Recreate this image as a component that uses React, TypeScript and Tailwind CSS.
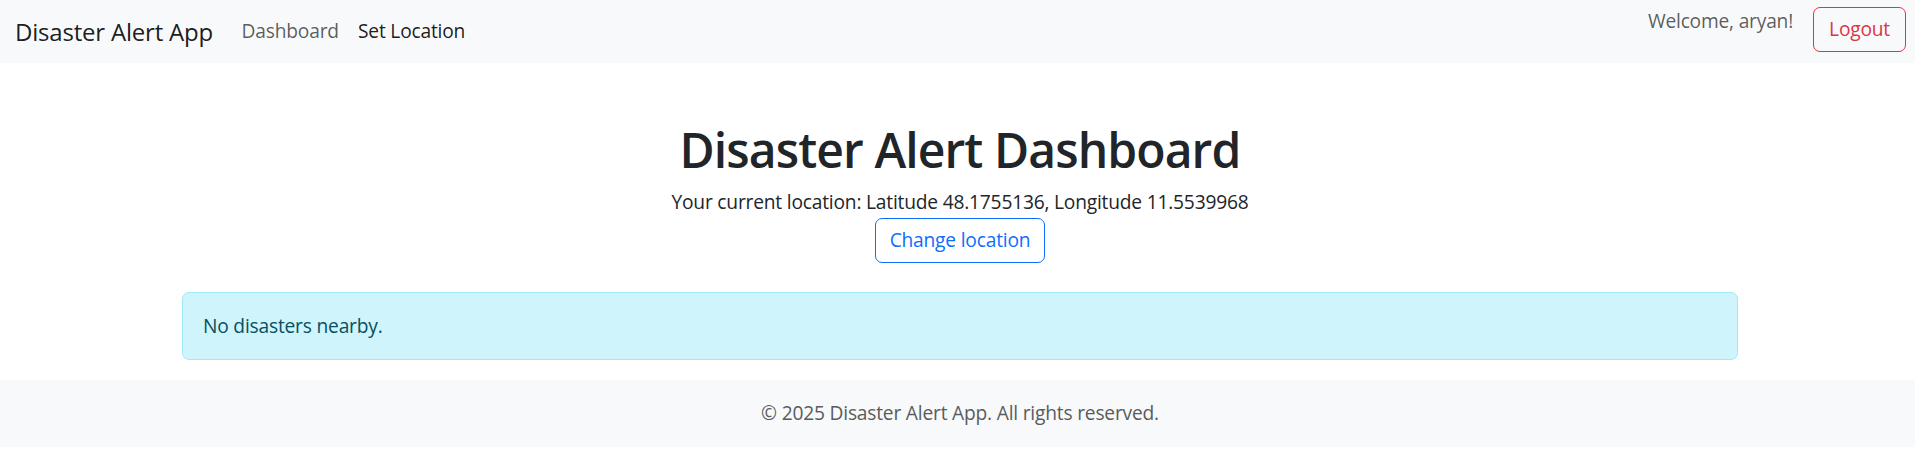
const NavBar = () => {
  return (
    <nav className="h-[63px] bg-[#f8f9fa] flex items-center justify-between pl-[15px] pr-[9px] tracking-[-0.2px]">
      <div className="flex items-center">
        <span className="text-[24px] leading-[36px] text-black/90 mr-[19px]">Disaster Alert App</span>
        <a className="text-[19.2px] leading-[28.8px] text-black/65 px-[9.6px]">Dashboard</a>
        <a className="text-[19.2px] leading-[28.8px] text-black/90 px-[9.6px]">Set Location</a>
      </div>
      <div className="flex items-start self-start pt-[7px] gap-[20px]">
        <span className="text-[19.2px] leading-[28.8px] text-black/65">Welcome, aryan!</span>
        <button className="h-[45px] px-[15px] border border-[#dc3545] rounded-[7px] text-[#dc3545] text-[19.2px] leading-[28.8px]">
          Logout
        </button>
      </div>
    </nav>
  );
};

export default function App() {
  return (
    <div className="min-h-[467px] bg-white font-['Open_Sans',sans-serif] text-[#212529]">
      <NavBar />
      <main className="w-[1556px] ml-[182px] pt-[58px] text-center tracking-[-0.2px]">
        <h1 className="text-[48px] leading-[57.6px] font-semibold tracking-[-0.9px] mb-[9.6px]">
          Disaster Alert Dashboard
        </h1>
        <p className="text-[19.2px] leading-[28.8px]">
          Your current location: Latitude 48.1755136, Longitude 11.5539968
        </p>
        <button className="mt-[1px] h-[45px] px-[14px] border border-[#0d6efd] rounded-[7px] text-[#0d6efd] text-[19.2px] leading-[28.8px]">
          Change location
        </button>
        <div className="mt-[29px] mb-[20px] h-[68px] flex items-center px-[20px] bg-[#cff4fc] border border-[#9eeaf9] rounded-[7px] text-[#055160] text-[19.2px] leading-[28.8px] text-left">
          No disasters nearby.
        </div>
      </main>
      <footer className="h-[67px] bg-[#f8f9fa] flex items-center justify-center pl-[5px] text-[19.2px] leading-[28.8px] tracking-[-0.2px] text-[#595c5f]">
        © 2025 Disaster Alert App. All rights reserved.
      </footer>
    </div>
  );
}
